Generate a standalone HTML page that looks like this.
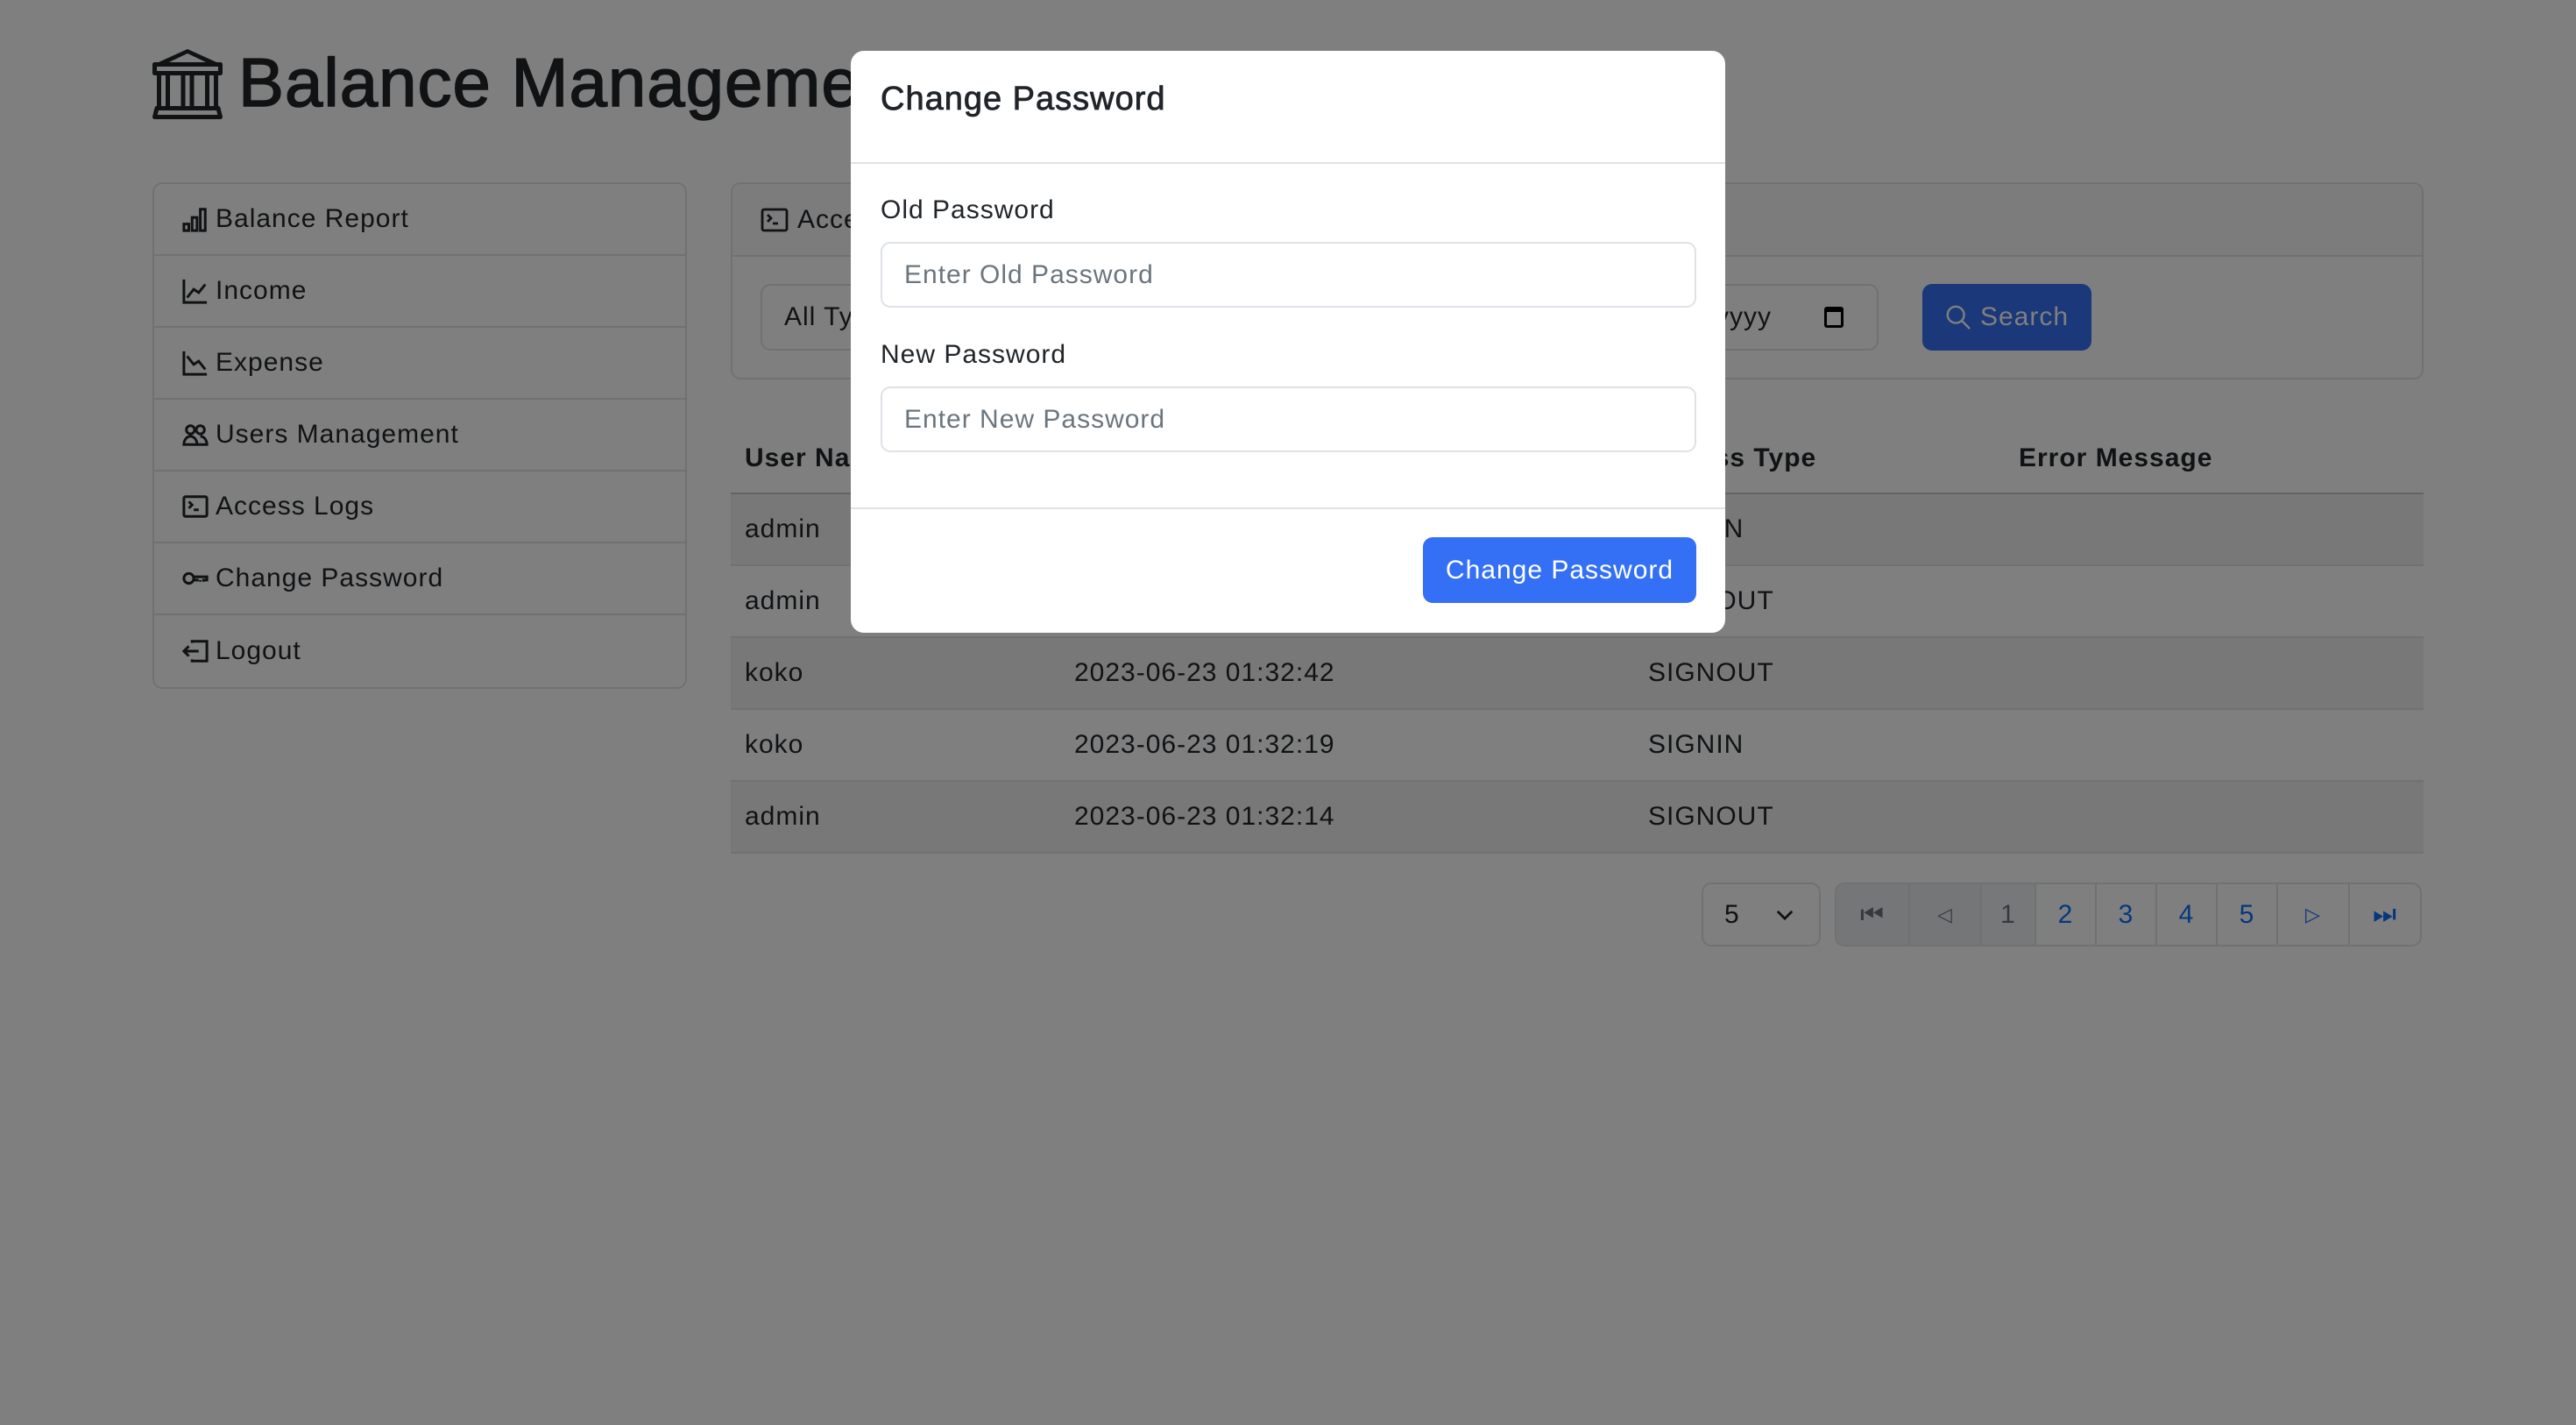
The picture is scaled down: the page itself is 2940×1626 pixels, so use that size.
<!DOCTYPE html>
<html><head><meta charset="utf-8"><style>
*{box-sizing:border-box;margin:0;padding:0}
body{width:2940px;height:1626px;background:#fff;font-family:"Liberation Sans",sans-serif;color:#212529;position:relative;overflow:hidden;font-size:30px;letter-spacing:1px}
.a{position:absolute}
h1{position:absolute;left:272px;top:48px;font-size:78px;font-weight:500;line-height:1.2;white-space:nowrap;-webkit-text-stroke:1.5px #212529}
.side{left:174px;top:208px;width:610px;border:2px solid #dee2e6;border-radius:11px;overflow:hidden}
.side div{height:82px;border-bottom:2px solid #dee2e6;display:flex;align-items:center;padding-left:32px;gap:8px}
.side div:last-child{border-bottom:none}
.side svg{width:30px;height:30px;fill:none;stroke:#212529;stroke-width:1.6}
.card{left:834px;top:208px;width:1932px;height:225px;border:2px solid #dee2e6;border-radius:11px}
.ch{height:83px;border-bottom:2px solid #dee2e6;background:#f8f9fa;border-radius:11px 11px 0 0;display:flex;align-items:center;padding-left:32px;gap:10px}
.inp{border:2px solid #dee2e6;border-radius:11px;background:#fff}
table{position:absolute;left:834px;top:484px;width:1932px;border-collapse:collapse}
td,th{height:82px;padding:0 16px;text-align:left;border-bottom:2px solid #dee2e6;font-size:30px}
th{font-weight:bold;height:79px;border-bottom:2px solid #c8c8c8}
tr.s td{background:#f0f0f0}
.pg{display:flex;left:2094px;top:1007px;height:73px;border:2px solid #dee2e6;border-radius:11px;overflow:hidden}
.pg span{display:flex;align-items:center;justify-content:center;border-right:2px solid #dee2e6;color:#0d6efd;font-size:30px;height:100%}
.pg span:last-child{border-right:none}
.ov{left:0;top:0;width:2940px;height:1626px;background:rgba(0,0,0,.5)}
.modal{left:971px;top:58px;width:998px;height:664px;background:#fff;border-radius:15px}
.mi{position:absolute;left:34px;width:931px;height:75px;border:2px solid #dee2e6;border-radius:11px;padding-left:25px;display:flex;align-items:center;color:#6c757d;font-size:30px}
.lab{position:absolute;left:34px;font-size:30px}
</style></head><body>
<svg class="a" style="left:174px;top:56px" width="80" height="80" viewBox="0 0 16 16" fill="#212529"><path d="m8 0 6.61 3h.89a.5.5 0 0 1 .5.5v2a.5.5 0 0 1-.5.5H15v7a.5.5 0 0 1 .485.38l.5 2a.498.498 0 0 1-.485.62H.5a.498.498 0 0 1-.485-.62l.5-2A.501.501 0 0 1 1 13V6H.5a.5.5 0 0 1-.5-.5v-2A.5.5 0 0 1 .5 3h.89L8 0ZM3.777 3h8.447L8 1 3.777 3ZM2 6v7h1V6H2Zm2 0v7h2.5V6H4Zm3.5 0v7h1V6h-1Zm2 0v7H12V6H9.5ZM13 6v7h1V6h-1Zm2-1V4H1v1h14Zm-.39 9H1.39l-.25 1h13.72l-.25-1Z"/></svg>
<h1>Balance Management</h1>
<div class="a side">
<div><svg viewBox="0 0 16 16"><rect x="1" y="11" width="3" height="4"/><rect x="6" y="7" width="3" height="8"/><rect x="11" y="2" width="3" height="13"/></svg>Balance Report</div>
<div><svg viewBox="0 0 16 16"><path d="M1 1v14h14M3 12l4-5 3 2 4-5"/></svg>Income</div>
<div><svg viewBox="0 0 16 16"><path d="M1 1v14h14M3 4l4 5 3-2 4 5"/></svg>Expense</div>
<div><svg viewBox="0 0 16 16"><circle cx="5" cy="5" r="2.5"/><circle cx="11" cy="5" r="2.5"/><path d="M1 14c0-3 2-5 4-5s4 2 4 5zM9 14h6c0-3-2-5-4-5"/></svg>Users Management</div>
<div><svg viewBox="0 0 16 16"><rect x="1" y="2" width="14" height="12" rx="1"/><path d="M4 5l2 2-2 2M7 10h3"/></svg>Access Logs</div>
<div><svg viewBox="0 0 16 16"><circle cx="4" cy="8" r="3"/><path d="M7 7h8v2h-2v1M11 9v1M7 9h3"/></svg>Change Password</div>
<div><svg viewBox="0 0 16 16"><path d="M6 3V2h9v12H6v-1M10 8H1M4 5 1 8l3 3"/></svg>Logout</div>
</div>
<div class="a card">
<div class="ch"><svg viewBox="0 0 16 16" width="32" height="32" fill="none" stroke="#212529" stroke-width="1.4"><rect x="1" y="2" width="14" height="12" rx="1"/><path d="M4 5l2 2-2 2M7 10h3"/></svg>Access Logs</div>
<div class="a inp" style="left:32px;top:114px;width:420px;height:76px;padding-left:25px;display:flex;align-items:center">All Types</div>
<div class="a inp" style="left:1100px;top:114px;width:208px;height:76px;display:flex;align-items:center;padding-left:20px;gap:60px">yyyy <span style="width:22px;height:24px;border:3px solid #000;border-top-width:6px;border-radius:3px"></span></div>
<div class="a" style="left:1358px;top:114px;width:193px;height:76px;background:#3470f5;border-radius:11px;color:#fff;display:flex;align-items:center;justify-content:center;gap:10px"><svg width="30" height="30" viewBox="0 0 16 16" fill="none" stroke="#fff" stroke-width="1.3"><circle cx="6.5" cy="6.5" r="5"/><path d="m10 10 5 5"/></svg>Search</div>
</div>
<table>
<tr><th style="width:376px">User Name</th><th style="width:655px">Access Date</th><th style="width:423px">Access Type</th><th>Error Message</th></tr>
<tr class="s"><td>admin</td><td>2023-06-23 01:32:50</td><td>SIGNIN</td><td></td></tr>
<tr><td>admin</td><td>2023-06-23 01:32:45</td><td>SIGNOUT</td><td></td></tr>
<tr class="s"><td>koko</td><td>2023-06-23 01:32:42</td><td>SIGNOUT</td><td></td></tr>
<tr><td>koko</td><td>2023-06-23 01:32:19</td><td>SIGNIN</td><td></td></tr>
<tr class="s"><td>admin</td><td>2023-06-23 01:32:14</td><td>SIGNOUT</td><td></td></tr>
</table>
<div class="a inp" style="left:1942px;top:1007px;width:136px;height:73px;display:flex;align-items:center;padding-left:24px;gap:40px">5 <svg width="22" height="14" viewBox="0 0 16 10" fill="none" stroke="#212529" stroke-width="2"><path d="M2 2l6 6 6-6"/></svg></div>
<div class="a pg">
<span style="width:84px;background:#e9ecef;color:#6c757d">⏮</span><span style="width:82px;background:#e9ecef;color:#6c757d;font-size:22px">◁</span><span style="width:62px;background:#eef0f2;color:#6c757d">1</span><span style="width:69px">2</span><span style="width:69px">3</span><span style="width:69px">4</span><span style="width:69px">5</span><span style="width:82px;font-size:22px">▷</span><span style="width:80px">⏭</span>
</div>
<div class="a ov"></div>
<div class="a modal">
<div style="position:absolute;left:34px;top:34px;font-size:38px;font-weight:500;-webkit-text-stroke:0.8px #212529">Change Password</div>
<div style="position:absolute;left:0;top:127px;width:100%;border-top:2px solid #dee2e6"></div>
<div class="lab" style="top:165px">Old Password</div>
<div class="mi" style="top:218px">Enter Old Password</div>
<div class="lab" style="top:330px">New Password</div>
<div class="mi" style="top:383px">Enter New Password</div>
<div style="position:absolute;left:0;top:521px;width:100%;border-top:2px solid #dee2e6"></div>
<div style="position:absolute;left:653px;top:555px;width:312px;height:75px;background:#3470f5;border-radius:11px;color:#fff;display:flex;align-items:center;justify-content:center">Change Password</div>
</div>
</body></html>
